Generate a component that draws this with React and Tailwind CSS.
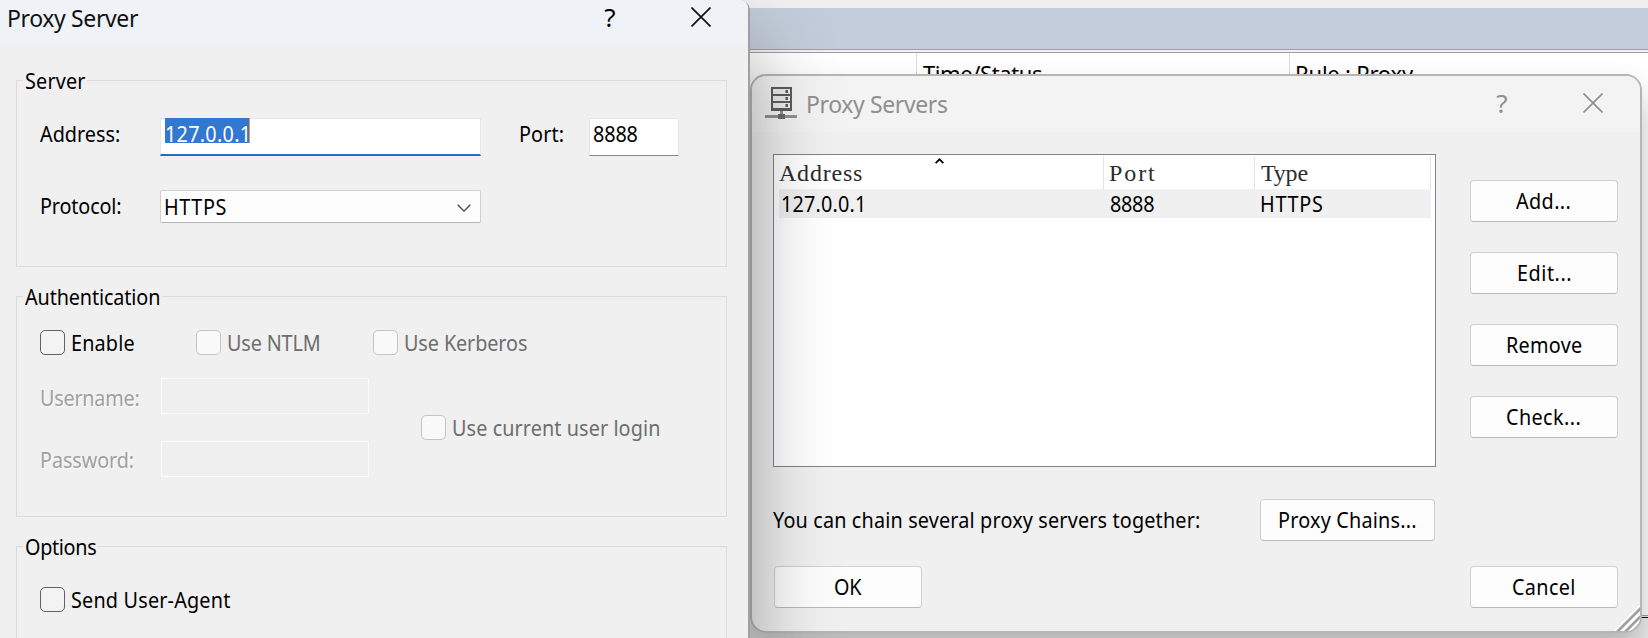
import React from "react";

function Txt({ className = "", children }) {
  return (
    <span className={"block w-max origin-left scale-x-90 whitespace-pre text-[22px] leading-[30px] " + className}>
      {children}
    </span>
  );
}

function Group({ title, gap, track, className, children }) {
  return (
    <section className={"relative border border-[#dcdcdc] " + className}>
      <div className={"absolute -top-4 left-[6px] bg-[#f0f0f0] pl-[2px] " + gap}>
        <Txt className={track}>{title}</Txt>
      </div>
      {children}
    </section>
  );
}

function Check({ label, track = "", disabled }) {
  return (
    <label className="flex h-[25px] items-start gap-[6px]">
      <span className={"size-[25px] shrink-0 rounded-[5px] border " + (disabled ? "border-[#c4c4c4] bg-[#f9f9f9]" : "border-[#626262] bg-[#f3f3f3]")} />
      <Txt className={"-mt-[3px] " + track + (disabled ? " text-[#6d6d6d]" : "")}>{label}</Txt>
    </label>
  );
}

function Btn({ label, track, w = "w-[148px]", pad }) {
  return (
    <button className={"flex h-[42px] items-start rounded-[4px] border border-[#d0d0d0] border-b-[#bababa] bg-[#fdfdfd] pt-[4px] " + w + " " + pad}>
      <Txt className={track}>{label}</Txt>
    </button>
  );
}

function Close({ className }) {
  return (
    <svg viewBox="0 0 20 20" className={"size-5 " + className} fill="none" stroke="currentColor" strokeWidth="1.7">
      <path d="M.5.5l19 19M19.5.5l-19 19" />
    </svg>
  );
}

function Help({ className = "" }) {
  return <span className={"block w-3 text-center text-[26px] leading-[36px] " + className}>?</span>;
}

function ServerIcon() {
  return (
    <svg viewBox="0 0 32 32" className="h-8 w-8" shapeRendering="crispEdges">
      <path d="M6 0h21v24H6z" fill="#5c5c5c" />
      <path d="M8 2h17v5H8zM8 9h17v5H8zM8 16h17v5H8z" fill="#ececec" />
      <path d="M20 3h3v3h-3zM20 10h3v3h-3zM20 17h3v3h-3z" fill="#a0a0a0" />
      <path d="M21 3h2v3h-2zM21 10h2v3h-2zM21 17h2v3h-2z" fill="#5c5c5c" />
      <path d="M15 24h3v4h-3zM0 28h32v3H0z" fill="#929292" />
      <path d="M13 27h7v5h-7z" fill="#6a6a6a" />
    </svg>
  );
}

function ProxyServerWindow() {
  return (
    <div className="relative z-20 h-[900px] w-[750px] shrink-0 rounded-tr-[10px] border-r-2 border-[#a0a0a0] bg-[#f0f0f0] shadow-[0_44px_84px_0_rgba(0,0,0,0.36)]">
      <header className="flex h-[46px] items-start rounded-tr-[8px] bg-[#eff3f8] pl-[7px]">
        <div className="w-[597px] pt-[2px] text-[23px] leading-[32px] tracking-[-0.37px] text-[#111]">Proxy Server</div>
        <Help className="-mt-px" />
        <Close className="ml-[75px] mt-[7px] text-[#111]" />
      </header>
      <div className="pl-4 pt-[34px]">
        <Group title="Server" gap="w-[64px]" track="tracking-[0.19px]" className="h-[187px] w-[711px]">
          <div className="flex pl-[23px] pt-[37px]">
            <div className="w-[120px]"><Txt>Address:</Txt></div>
            <div className="h-[38px] w-[321px] border border-b-2 border-[#e6e6e6] border-b-[#2b69bd] bg-white pl-1 pt-[2px]">
              <div className="h-[25px] w-[85px] border-r border-[#e8935a] bg-[#3277d0]">
                <Txt className="-mt-[3px] tracking-[0.3px] text-white">127.0.0.1</Txt>
              </div>
            </div>
            <div className="w-[108px] pl-[38px]"><Txt className="tracking-[0.14px]">Port:</Txt></div>
            <div className="h-[38px] w-[90px] border border-[#e6e6e6] border-b-[#868686] bg-white pl-[3px]">
              <Txt className="-mt-px tracking-[-0.14px]">8888</Txt>
            </div>
          </div>
          <div className="flex pl-[23px] pt-[34px]">
            <div className="w-[120px]"><Txt className="tracking-[-0.16px]">Protocol:</Txt></div>
            <div className="flex h-[33px] w-[321px] items-start justify-between rounded-[2px] border border-[#d0d0d0] border-b-[#b5b5b5] bg-[#fdfdfd] pl-[3px] pr-[9px]">
              <Txt className="tracking-[0.68px]">HTTPS</Txt>
              <svg viewBox="0 0 14 8" className="mt-[13px] h-2 w-[14px]" fill="none" stroke="#444" strokeWidth="1.3"><path d="M.7.8L7 7.1 13.3.8" /></svg>
            </div>
          </div>
        </Group>
        <Group title="Authentication" gap="w-[139px]" track="tracking-[-0.14px]" className="mt-[29px] h-[221px] w-[711px]">
          <div className="flex pl-[23px] pt-[33px]">
            <div className="w-[156px]"><Check label="Enable" track="tracking-[0.19px]" /></div>
            <div className="w-[177px]"><Check label="Use NTLM" track="tracking-[-0.16px]" disabled /></div>
            <Check label="Use Kerberos" track="tracking-[-0.11px]" disabled />
          </div>
          <div className="flex pl-[23px] pt-[23px] text-[#a0a0a0]">
            <div className="w-[121px] pt-[4px] [text-shadow:1px_1px_0_#fff]">
              <Txt className="tracking-[-0.27px]">Username:</Txt>
              <Txt className="mt-8 tracking-[-0.1px]">Password:</Txt>
            </div>
            <div className="flex w-[208px] flex-col gap-[27px]">
              <div className="h-[36px] border border-[#fbfbfb]" />
              <div className="h-[36px] border border-[#fbfbfb]" />
            </div>
            <div className="pl-[52px] pt-[37px]"><Check label="Use current user login" track="tracking-[0.1px]" disabled /></div>
          </div>
        </Group>
        <Group title="Options" gap="w-[75px]" track="tracking-[-0.36px]" className="mt-[29px] h-[240px] w-[711px]">
          <div className="pl-[23px] pt-[40px]"><Check label="Send User-Agent" track="tracking-[0.21px]" /></div>
        </Group>
      </div>
    </div>
  );
}

function ProxyServersWindow() {
  return (
    <div className="absolute left-[750px] top-[74px] z-10 h-[559px] w-[892px] overflow-hidden rounded-[16px] border-2 border-[#b5b5b5] bg-[#f0f0f0]">
      <header className="flex h-[56px] items-start bg-[#f3f3f3] pl-[13px] text-[#8f8f8f]">
        <div className="pt-[11px]"><ServerIcon /></div>
        <div className="w-[700px] pl-[9px] pt-[12px] text-[23px] leading-[32px] tracking-[-0.38px]">Proxy Servers</div>
        <Help className="-ml-[1px] mt-[9px]" />
        <Close className="ml-[75px] mt-[17px]" />
      </header>
      <div className="flex pl-[21px] pt-[22px]">
        <div className="h-[313px] w-[663px] border border-[#828290] bg-white pl-[5px] pt-[1px]">
          <div className="flex h-[33px] w-[652px] font-['Liberation_Serif',serif] text-[24px] leading-[34px] text-[#2c2c2c]">
            <div className="relative w-[325px] border-r border-[#e3e3e3] tracking-[0.78px]">
              Address
              <svg viewBox="0 0 9 6" className="absolute left-[156px] top-[2px] h-[6px] w-[9px]" fill="none" stroke="#000" strokeWidth="1.8"><path d="M.6 5.2L4.5 1.3 8.4 5.2" /></svg>
            </div>
            <div className="w-[151px] border-r border-[#e3e3e3] pl-[5px] tracking-[1.89px]">Port</div>
            <div className="flex-1 border-r border-[#e3e3e3] pl-[6px] tracking-[-0.2px]">Type</div>
          </div>
          <div className="flex h-[29px] w-[652px] bg-[#f0f0f0]">
            <div className="-mt-px w-[325px] pl-[2px]"><Txt className="tracking-[0.2px]">127.0.0.1</Txt></div>
            <div className="-mt-px w-[151px] pl-[6px]"><Txt className="tracking-[-0.3px]">8888</Txt></div>
            <div className="-mt-px pl-[5px]"><Txt className="tracking-[0.8px]">HTTPS</Txt></div>
          </div>
        </div>
        <div className="flex flex-col gap-[30px] pl-[34px] pt-[26px]">
          <Btn label="Add..." track="tracking-[0.42px]" pad="pl-[45px]" />
          <Btn label="Edit..." track="tracking-[0.6px]" pad="pl-[46px]" />
          <Btn label="Remove" track="tracking-[0.3px]" pad="pl-[35px]" />
          <Btn label="Check..." track="tracking-[0.44px]" pad="pl-[35px]" />
        </div>
      </div>
      <div className="flex pl-[21px] pt-[32px]">
        <div className="w-[487px] pt-[5px]"><Txt className="tracking-[0.18px]">You can chain several proxy servers together:</Txt></div>
        <Btn label="Proxy Chains..." track="tracking-[0.23px]" w="w-[175px]" pad="pl-[17px]" />
      </div>
      <div className="flex justify-between pl-[22px] pr-[22px] pt-[25px]">
        <Btn label="OK" track="tracking-[-0.18px]" pad="pl-[59px]" />
        <Btn label="Cancel" track="tracking-[0.4px]" pad="pl-[41px]" />
      </div>
      <svg viewBox="0 0 26 26" className="absolute bottom-0 right-0 size-[26px]" fill="none">
        <path d="M0 26L26 0V26Z" fill="#fff" />
        <path d="M2 28L28 2M10 28L28 10M17 28L28 17" stroke="#a0a0a0" strokeWidth="2.8" />
      </svg>
    </div>
  );
}

export default function App() {
  return (
    <div className="relative flex h-[638px] w-[1648px] overflow-hidden bg-[#f0f0f0] font-['Noto_Sans',sans-serif] text-black">
      <ProxyServerWindow />
      <div className="-ml-[2px] flex flex-1 flex-col">
        <div className="h-2 bg-[#f0f0f0]" />
        <div className="h-[41px] bg-[#c3ccda]" />
        <div className="h-1 border-y border-[#a0a0a0] bg-[#f0f0f0]" />
        <div className="flex h-[562px] bg-white pt-[5px] text-[22px] leading-[30px]">
          <div className="-mt-[5px] w-[169px] border-r border-[#dcdcdc]" />
          <div className="-mt-[5px] w-[373px] border-r border-[#dcdcdc] pl-[6px] pt-[5px] tracking-[-0.4px]">Time/Status</div>
          <div className="pl-[5px] tracking-[-0.2px]">Rule : Proxy</div>
        </div>
        <div className="h-[3px] border-b border-t border-b-black border-t-[#a0a0a0] bg-[#f0f0f0]" />
      </div>
      <div className="absolute left-[750px] top-[74px] h-[559px] w-[892px] rounded-[16px] shadow-[0_20px_34px_0_rgba(0,0,0,0.26)]" />
      <ProxyServersWindow />
    </div>
  );
}
